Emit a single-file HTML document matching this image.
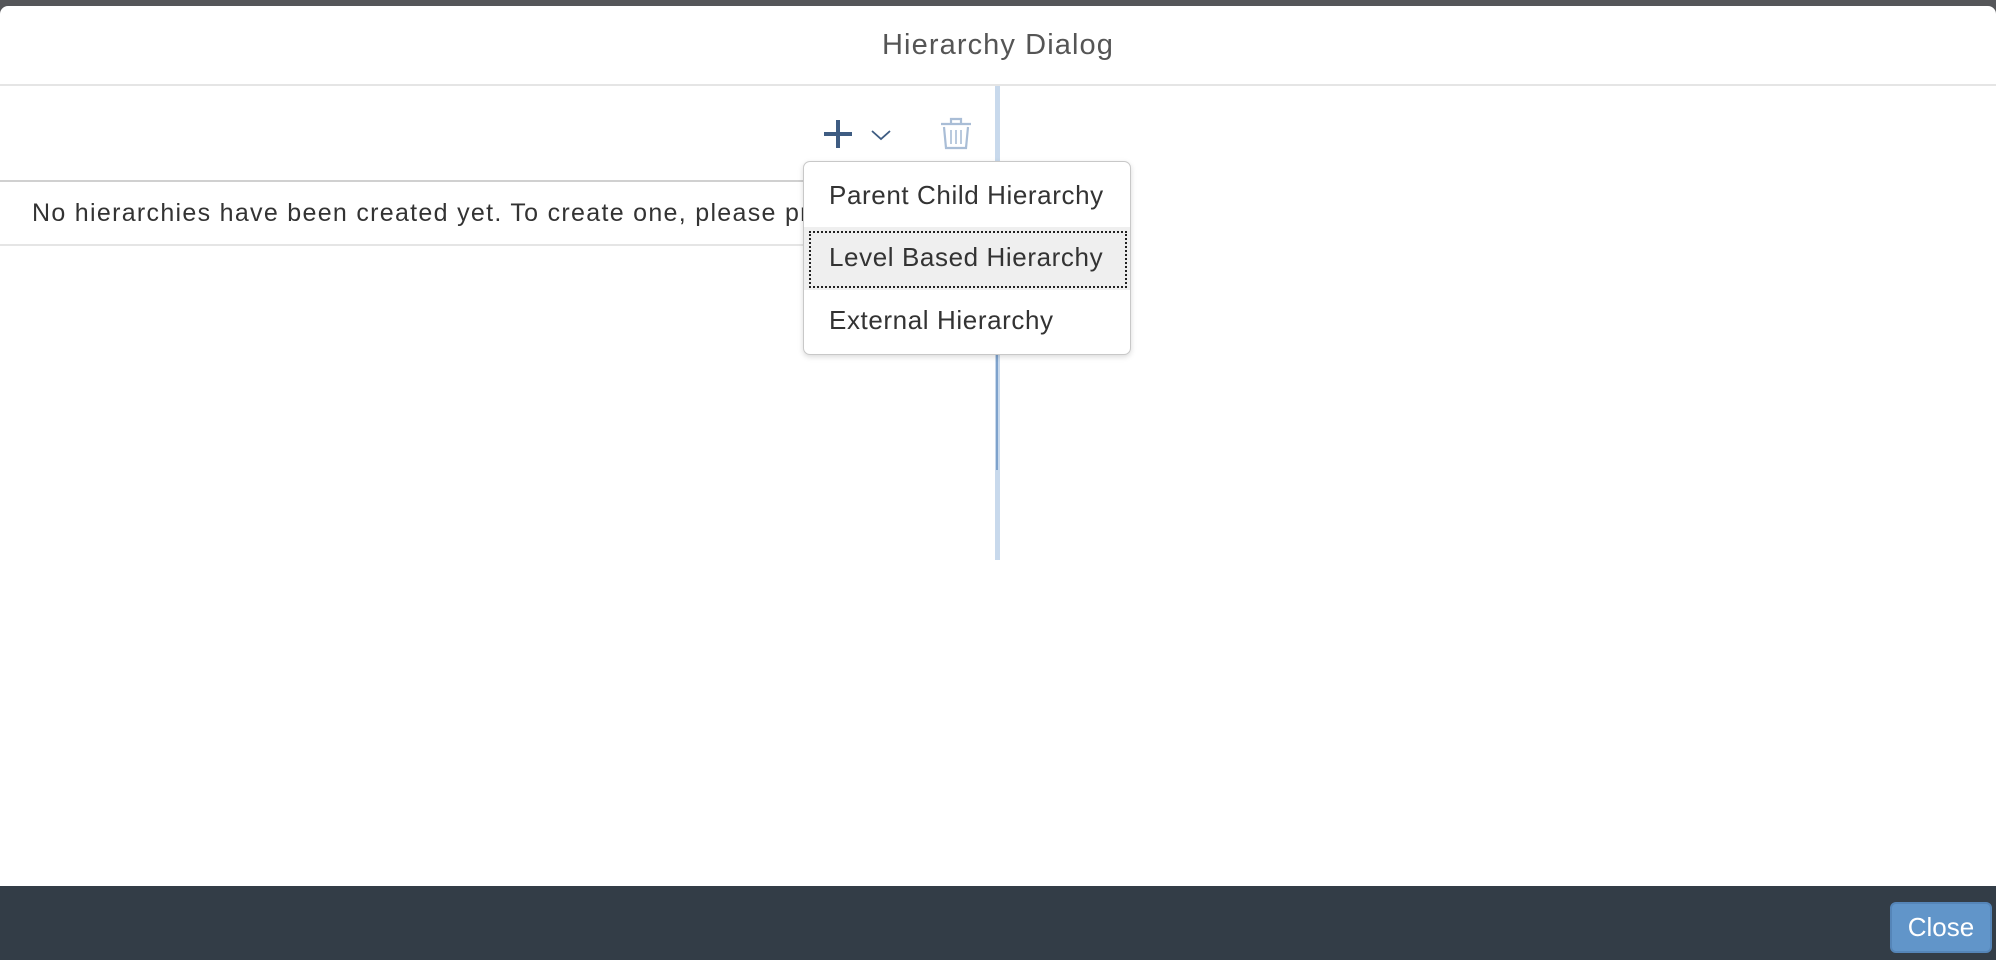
<!DOCTYPE html>
<html><head><meta charset="utf-8"><style>
*{margin:0;padding:0;box-sizing:border-box}
body{width:1996px;height:960px;overflow:hidden;background:#555659;font-family:"Liberation Sans",sans-serif;position:relative}
.dlg{position:absolute;left:0;top:6px;width:1996px;height:954px;background:#fff;border-radius:8px 8px 0 0}
.title{position:absolute;left:0;top:6px;width:1996px;height:79px;text-align:center;line-height:79px;font-size:29px;color:#555;letter-spacing:1.1px}
.hl{position:absolute;left:0;width:1996px;height:2px;background:#e5e5e5}
.list{position:absolute;left:0;top:180px;width:997px;height:66px;border-top:2px solid #d0d0d0;border-bottom:2px solid #e5e5e5;font-size:25px;color:#333;line-height:62px;padding-left:32px;white-space:nowrap;overflow:hidden;letter-spacing:1.3px}
.sep{position:absolute;left:995px;top:86px;width:5px;height:474px;background:#c8d9ec}
.sep2{position:absolute;left:996px;top:350px;width:2px;height:120px;background:#7ea2cc}
.menu{position:absolute;left:803px;top:161px;width:328px;height:194px;background:#fff;border:1px solid #c8c8c8;border-radius:7px;box-shadow:0 2px 6px rgba(0,0,0,.15)}
.it{position:absolute;left:0;width:326px;height:63px;line-height:61px;padding-left:25px;font-size:26px;color:#333;white-space:nowrap;letter-spacing:0.6px}
.foc{position:absolute;left:5px;top:69px;width:318px;height:57px;border:2px dotted #222}
.foot{position:absolute;left:0;top:886px;width:1996px;height:74px;background:#333d47}
.btn{position:absolute;left:1890px;top:902px;width:102px;height:51px;background:#6195c9;border:2px solid #5585b8;border-radius:6px;color:#fff;font-size:26px;text-align:center;line-height:47px}
</style></head><body>
<div class="dlg"></div>
<div class="title">Hierarchy Dialog</div>
<div class="hl" style="top:84px"></div>
<div class="list">No hierarchies have been created yet. To create one, please press the + button.</div>
<div class="sep"></div><div class="sep2"></div>
<svg style="position:absolute;left:820px;top:115px" width="160" height="40" viewBox="820 115 160 40">
<path d="M838 120V148M824 134H852" stroke="#3e5c82" stroke-width="4" fill="none"/>
<path d="M872 131L881 139L890 131" stroke="#3e5c82" stroke-width="1.8" fill="none"/>
<g stroke="#a9bdd6" stroke-width="2.2" fill="none">
<path d="M941 124H971M951 124V119H961V124"/>
<path d="M944 127L946 148H966L968 127"/>
<path d="M951 130V144M956 130V144M961 130V144" stroke-width="1.6"/>
</g></svg>
<div class="menu">
<div class="it" style="top:3px">Parent Child Hierarchy</div>
<div class="it" style="top:65px;background:#efefef">Level Based Hierarchy</div>
<div class="foc"></div>
<div class="it" style="top:128px">External Hierarchy</div>
</div>
<div class="foot"></div>
<div class="btn">Close</div>
</body></html>
